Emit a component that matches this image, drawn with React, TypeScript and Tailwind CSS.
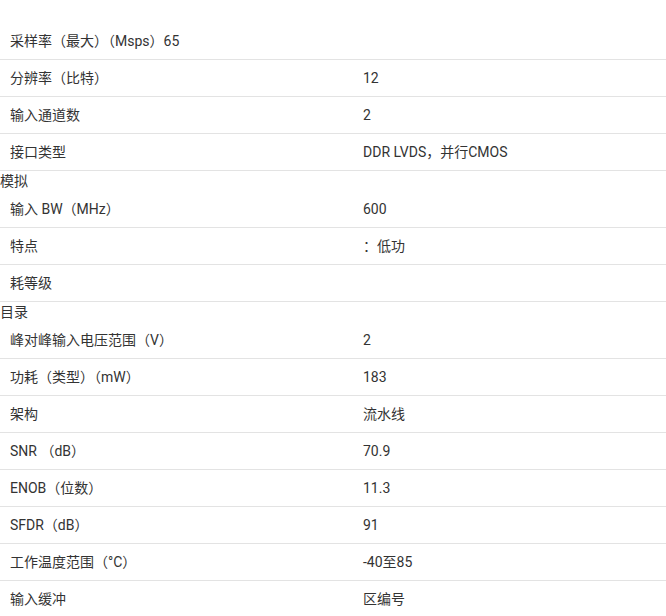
type Item = { label?: string; value?: string; caption?: string }

const items: Item[] = [
  { label: "采样率（最大）（Msps）65", value: "" },
  { label: "分辨率（比特）", value: "12" },
  { label: "输入通道数", value: "2" },
  { label: "接口类型", value: "DDR LVDS，并行CMOS" },
  { caption: "模拟" },
  { label: "输入 BW（MHz）", value: "600" },
  { label: "特点", value: "：低功" },
  { label: "耗等级", value: "" },
  { caption: "目录" },
  { label: "峰对峰输入电压范围（V）", value: "2" },
  { label: "功耗（类型）（mW）", value: "183" },
  { label: "架构", value: "流水线" },
  { label: "SNR （dB）", value: "70.9" },
  { label: "ENOB（位数）", value: "11.3" },
  { label: "SFDR（dB）", value: "91" },
  { label: "工作温度范围（°C）", value: "-40至85" },
  { label: "输入缓冲", value: "区编号" },
]

const App = () => {
  return (
    <div
      className="w-[666px] h-[616px] overflow-hidden bg-white pt-[23px] text-[14px] text-[#333333]"
      style={{ fontFamily: "Roboto, 'Noto Sans CJK SC', sans-serif" }}
    >
      {items.map((item, i) => {
        if (item.caption)
          return (
            <div key={i} className="h-[20px] leading-[20px]">
              {item.caption}
            </div>
          )
        return (
          <div
            key={i}
            className="grid grid-cols-[353px_1fr] h-[37px] items-center border-b border-[#e3e3e3]"
          >
            <div className="pl-[10px] whitespace-nowrap">{item.label}</div>
            <div className="pl-[10px] whitespace-nowrap">{item.value}</div>
          </div>
        )
      })}
    </div>
  )
}

export default App
